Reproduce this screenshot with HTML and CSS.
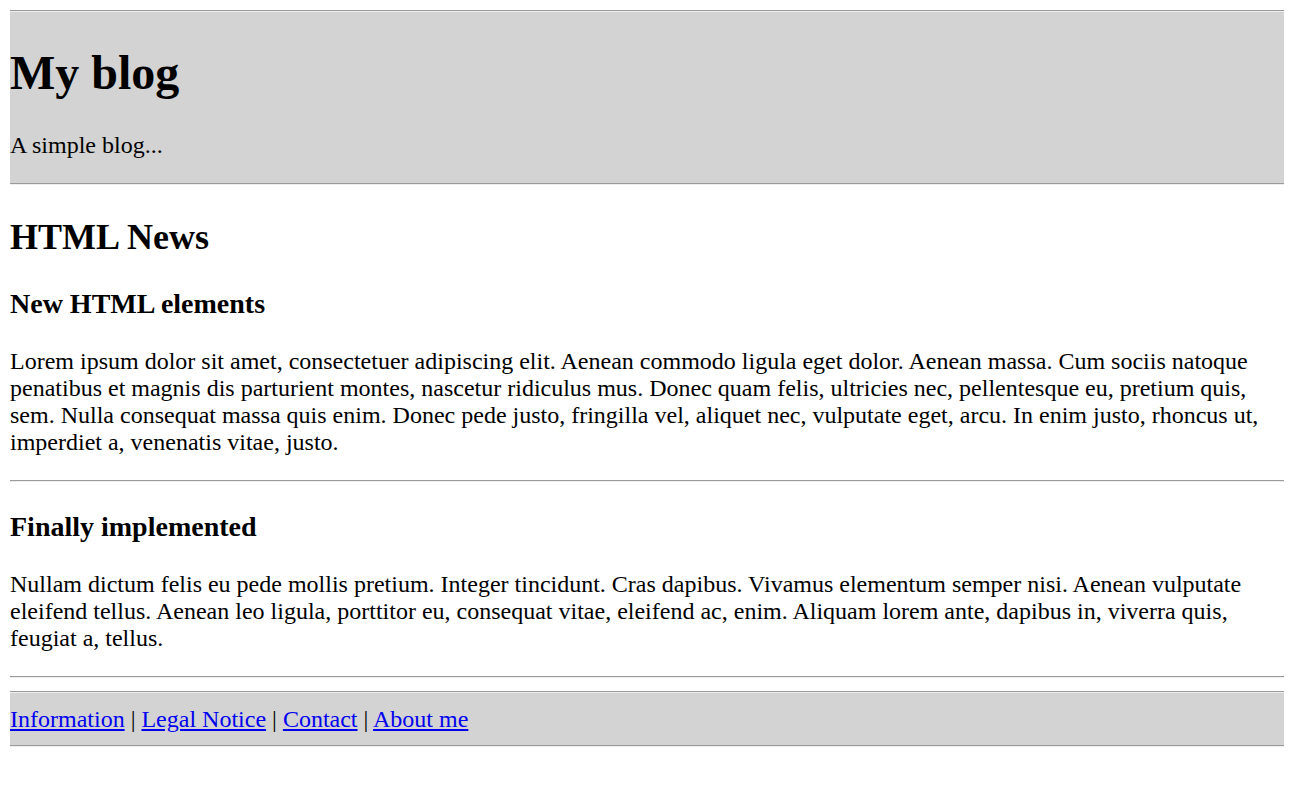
FILE: index.html
```html
<!DOCTYPE html>
<html lang="en">
<head>
<meta charset="utf-8">
<title>My blog</title>
<link rel="stylesheet" href="styles.css">
</head>
<body>
<header class="site-header">
  <div class="rule"></div>
  <div class="masthead">
    <h1 class="site-title">My blog</h1>
    <p class="tagline">A simple blog...</p>
  </div>
  <div class="rule"></div>
</header>
<main class="content">
  <h2 class="section-title">HTML News</h2>
  <article class="post">
    <h3 class="post-title">New HTML elements</h3>
    <p class="post-text">Lorem ipsum dolor sit amet, consectetuer adipiscing elit. Aenean commodo ligula eget dolor. Aenean massa. Cum sociis natoque penatibus et magnis dis parturient montes, nascetur ridiculus mus. Donec quam felis, ultricies nec, pellentesque eu, pretium quis, sem. Nulla consequat massa quis enim. Donec pede justo, fringilla vel, aliquet nec, vulputate eget, arcu. In enim justo, rhoncus ut, imperdiet a, venenatis vitae, justo.</p>
  </article>
  <hr class="divider">
  <article class="post">
    <h3 class="post-title">Finally implemented</h3>
    <p class="post-text">Nullam dictum felis eu pede mollis pretium. Integer tincidunt. Cras dapibus. Vivamus elementum semper nisi. Aenean vulputate eleifend tellus. Aenean leo ligula, porttitor eu, consequat vitae, eleifend ac, enim. Aliquam lorem ante, dapibus in, viverra quis, feugiat a, tellus.</p>
  </article>
  <hr class="divider">
</main>
<footer class="site-footer">
  <div class="rule"></div>
  <nav class="footer-nav"><a href="#">Information</a> | <a href="#">Legal Notice</a> | <a href="#">Contact</a> | <a href="#">About me</a></nav>
  <div class="rule"></div>
</footer>
</body>
</html>
```
FILE: styles.css
```css
html { background: #fff; }
body {
  margin: 10px;
  font-family: "Liberation Serif", "Times New Roman", serif;
  font-size: 24px;
  line-height: 27px;
  color: #000;
}
.rule {
  height: 0;
  border-top: 1px solid #9a9a9a;
  border-bottom: 1px solid #eeeeee;
}
.masthead {
  background: #d3d3d3;
  display: flow-root;
}
.site-title {
  font-size: 48px;
  line-height: 55px;
  font-weight: bold;
  margin: 33px 0 32px;
}
.tagline {
  margin: 24px 0 24px;
}
.section-title {
  font-size: 36px;
  line-height: 41px;
  font-weight: bold;
  margin: 32px 0 30px;
}
.post-title {
  font-size: 28px;
  line-height: 32px;
  font-weight: bold;
  margin: 29px 0 28px;
}
.post-text {
  margin: 24px 0;
}
.divider {
  height: 0;
  margin: 12px 0;
  border: 0;
  border-top: 1px solid #9a9a9a;
  border-bottom: 1px solid #eeeeee;
}
.site-footer {
  margin-top: 13px;
}
.footer-nav {
  background: #d3d3d3;
  padding: 13px 0 12px;
}
.footer-nav a {
  color: #0000ee;
  text-decoration: underline;
}
```
